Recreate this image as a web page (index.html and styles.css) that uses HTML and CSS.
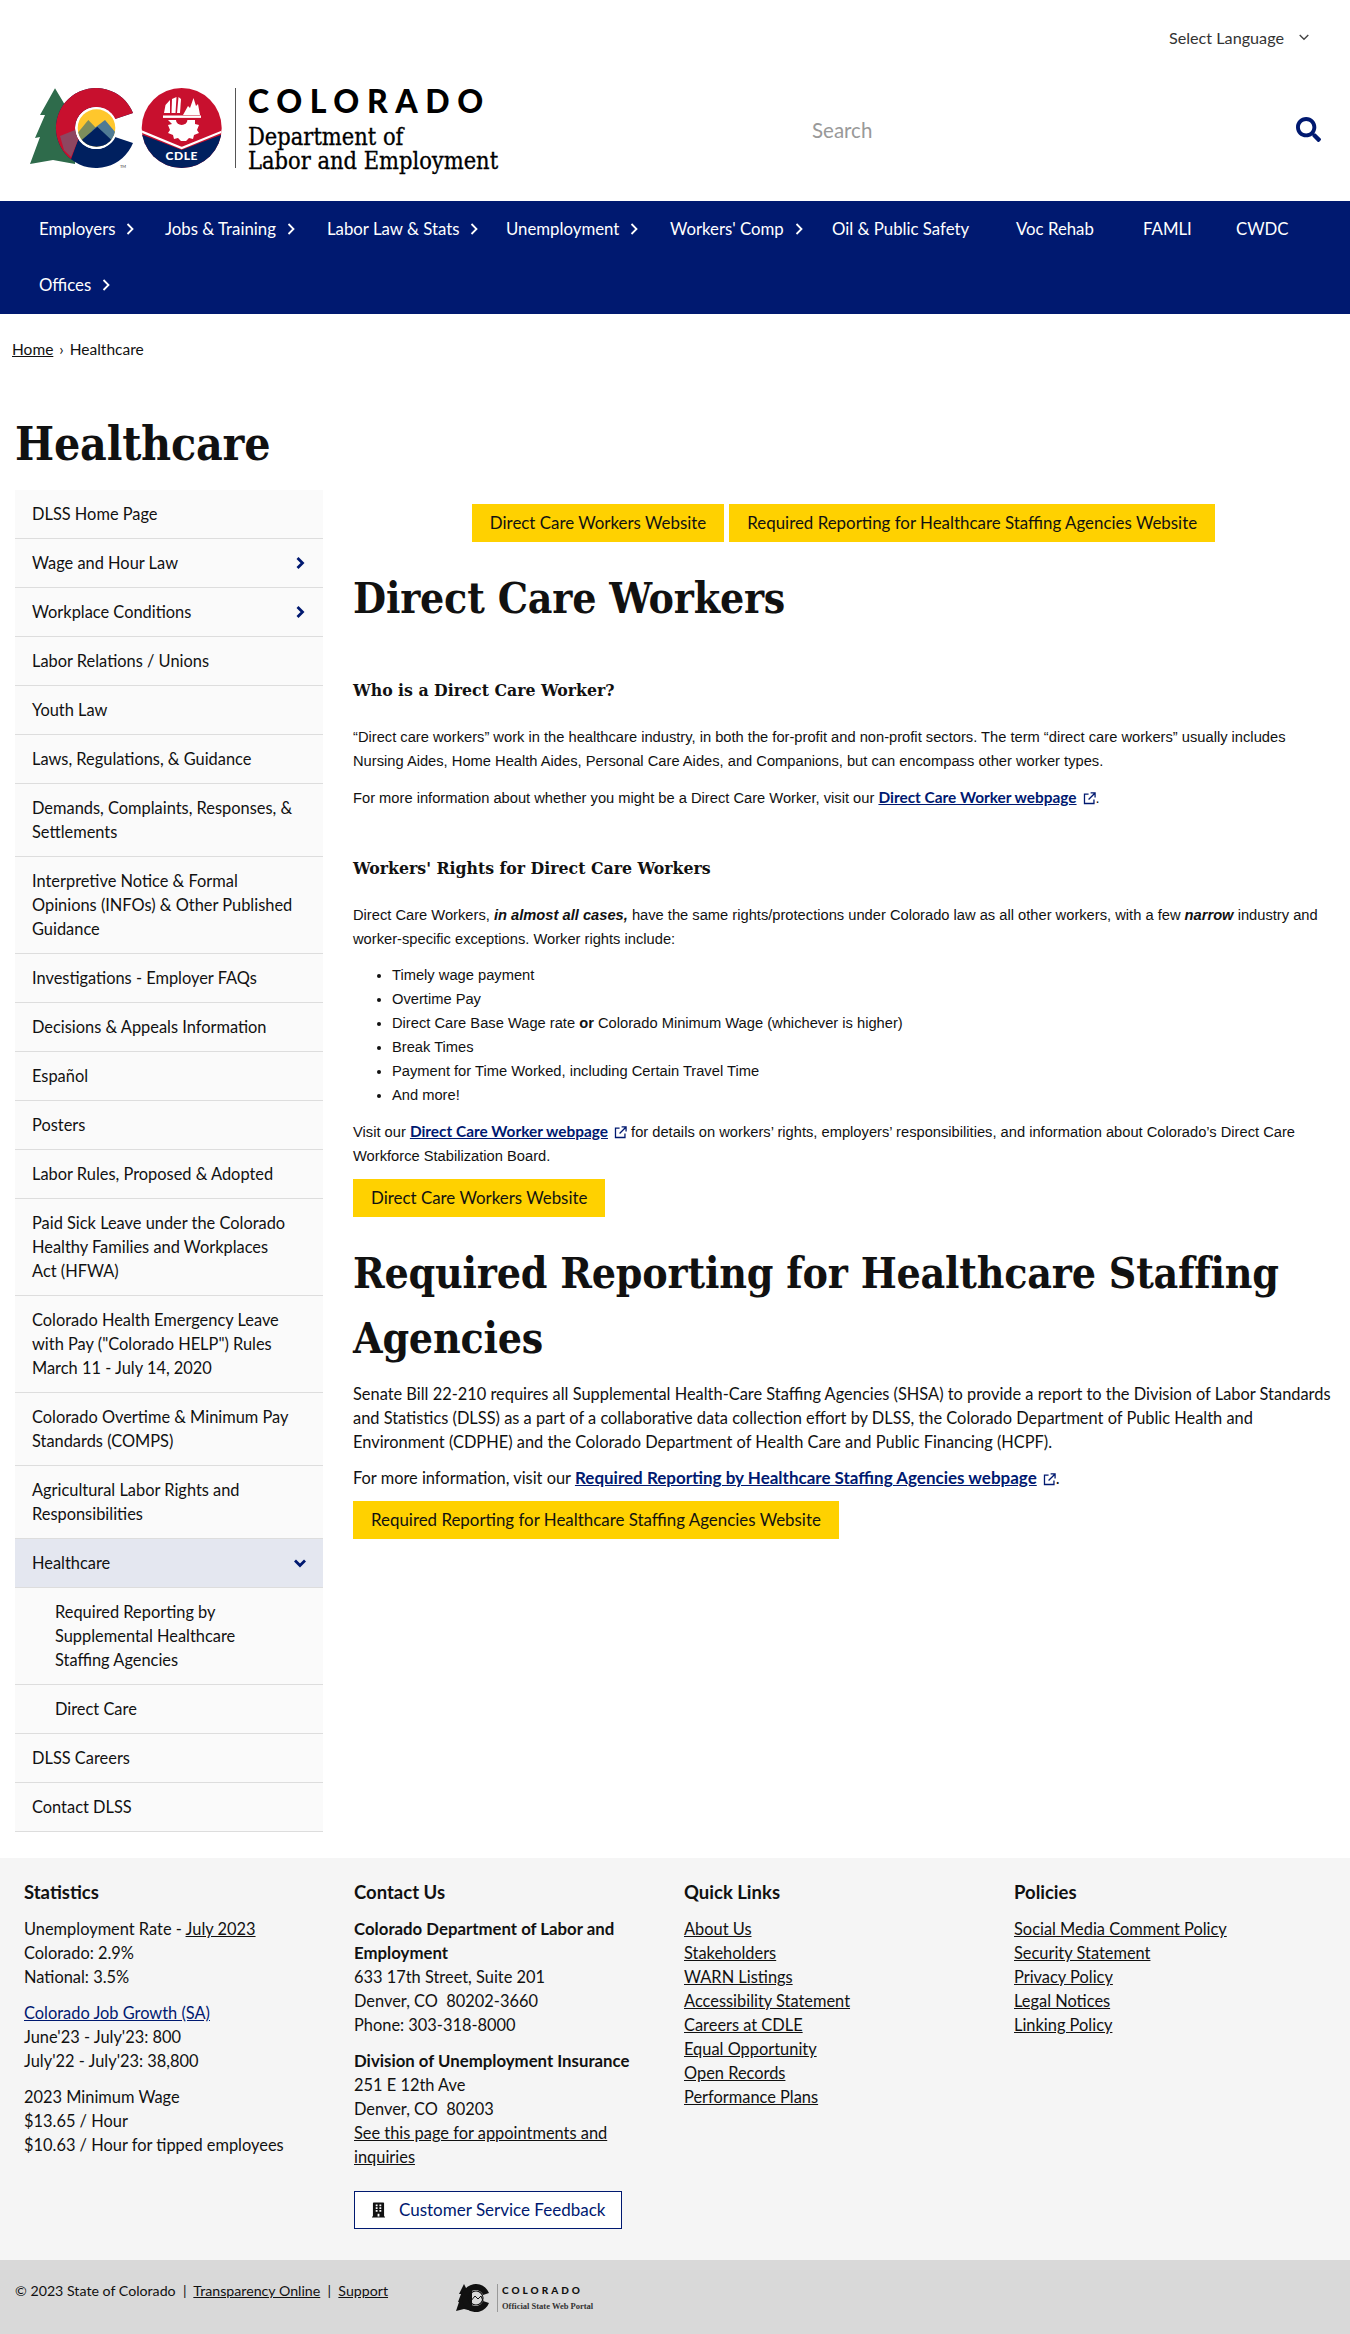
FILE: index.html
```html
<!DOCTYPE html>
<html lang="en">
<head>
<meta charset="utf-8">
<title>Healthcare | Colorado Department of Labor and Employment</title>
<link rel="stylesheet" href="styles.css">
</head>
<body>
<svg class="defs" width="0" height="0" aria-hidden="true">
  <symbol id="ext" viewBox="0 0 14 14"><path d="M6 2.2H1.6v10.2h10.2V8M8.2 1h4.8v4.8M13 1L6 8" fill="none" stroke="currentColor" stroke-width="1.4"/></symbol>
  <symbol id="chev" viewBox="0 0 10 14"><path d="M2.5 2l5 5-5 5" fill="none" stroke="currentColor" stroke-width="1.8"/></symbol>
  <symbol id="chevb" viewBox="0 0 10 14"><path d="M2.5 2l5 5-5 5" fill="none" stroke="currentColor" stroke-width="2.8"/></symbol>
</svg>

<header class="site-header">
  <div class="lang-row">
    <span class="lang">Select Language</span>
    <svg class="lang-chev" viewBox="0 0 14 10"><path d="M2 2l5 5 5-5" fill="none" stroke="#444" stroke-width="1.6"/></svg>
  </div>
  <div class="brand-row">
    <a class="brand" href="#">
      <svg class="brand-mark" viewBox="28 86 197 84" role="img" aria-label="Colorado and CDLE logos">
        <defs>
          <clipPath id="redclip"><polygon points="50,80 140,80 140,128 78,140 70,162 50,162"/></clipPath>
          <clipPath id="sunclip"><circle cx="96.5" cy="128" r="18.8"/></clipPath>
          <clipPath id="cdleclip"><circle cx="181.7" cy="128" r="40"/></clipPath>
        </defs>
        <polygon fill="#2e6b4b" points="55,88.3 40,115 45,115 35,138 40,137 30,164 53,160 75,164 75,105 65,105"/>
        <path fill="#00205f" d="M133 113A40 40 0 1 0 133 143L115 137A21 21 0 1 1 115 119Z"/>
        <path fill="#c8102e" clip-path="url(#redclip)" d="M133 113A40 40 0 1 0 133 143L115 137A21 21 0 1 1 115 119Z"/>
        <polygon fill="#8e4660" points="60,136 75,130 78,140 71,157 64,150"/>
        <circle cx="96.5" cy="128" r="21" fill="#fff"/>
        <g clip-path="url(#sunclip)">
          <rect x="76" y="108" width="42" height="40" fill="#ffc72c"/>
          <polygon fill="#7d8d5c" points="72,140 88.3,120 100,132 90,150"/>
          <polygon fill="#4f7a94" points="92,130 105,120 122,140 104,150"/>
          <polygon fill="#00205f" points="70,150 97.3,126.7 122,150"/>
        </g>
        <text class="tm" x="120" y="168">TM</text>
        <circle cx="181.7" cy="128" r="40" fill="#c8102e"/>
        <g clip-path="url(#cdleclip)">
          <polygon fill="#00205f" points="138,133 181.7,150 226,133 226,172 138,172"/>
          <polyline fill="none" stroke="#fff" stroke-width="2.2" points="138,130 181.7,148 226,130"/>
        </g>
        <text class="cdle" x="181.7" y="160" text-anchor="middle">CDLE</text>
        <g fill="#fff">
          <polygon points="164,113 165.5,105 170,100 170,113"/>
          <polygon points="171.5,113 172,99 176.5,97 175.5,113"/>
          <polygon points="177,113 178.5,97 181,99 180,113"/>
          <polygon points="183,115 188,106 190,108 193.5,98 196,106 198,104 200,115"/>
          <rect x="163" y="115.5" width="38" height="2.4"/>
          <path d="M168 120h27v4l4 1-2 5 2 3-5 2-1 4-4-1-3 3h-5l-3-3-4 1-1-4-5-2 2-3-2-5 4-1z"/>
        </g>
        <path d="M176 120a5.7 5 0 0 0 11.4 0z" fill="#c8102e"/>
      </svg>
      <span class="brand-rule"></span>
      <span class="brand-text">
        <span class="brand-state">COLORADO</span>
        <span class="brand-dept">Department of<br>Labor and Employment</span>
      </span>
    </a>
    <div class="search">
      <span class="search-input">Search</span>
      <svg class="search-icon" viewBox="0 0 512 512"><path fill="#001970" d="M505 442.7L405.3 343c-4.5-4.5-10.6-7-17-7H372c27.6-35.3 44-79.7 44-128C416 93.1 322.9 0 208 0S0 93.1 0 208s93.1 208 208 208c48.3 0 92.7-16.4 128-44v16.3c0 6.4 2.5 12.5 7 17l99.7 99.7c9.4 9.4 24.6 9.4 33.9 0l28.3-28.3c9.4-9.4 9.4-24.6.1-34zM208 336c-70.7 0-128-57.2-128-128 0-70.7 57.2-128 128-128 70.7 0 128 57.2 128 128 0 70.7-57.2 128-128 128z"/></svg>
    </div>
  </div>
  <nav class="main-nav">
    <a class="nav-item w1" href="#">Employers<svg class="nav-chev"><use href="#chev"/></svg></a>
    <a class="nav-item w2" href="#">Jobs &amp; Training<svg class="nav-chev"><use href="#chev"/></svg></a>
    <a class="nav-item w3" href="#">Labor Law &amp; Stats<svg class="nav-chev"><use href="#chev"/></svg></a>
    <a class="nav-item w4" href="#">Unemployment<svg class="nav-chev"><use href="#chev"/></svg></a>
    <a class="nav-item w5" href="#">Workers' Comp<svg class="nav-chev"><use href="#chev"/></svg></a>
    <a class="nav-item w6" href="#">Oil &amp; Public Safety</a>
    <a class="nav-item w7" href="#">Voc Rehab</a>
    <a class="nav-item w8" href="#">FAMLI</a>
    <a class="nav-item w9" href="#">CWDC</a>
    <span class="nav-break"></span>
    <a class="nav-item" href="#">Offices<svg class="nav-chev"><use href="#chev"/></svg></a>
  </nav>
</header>

<div class="breadcrumb"><a href="#">Home</a><span class="crumb-sep">›</span><span>Healthcare</span></div>
<h1 class="page-title">Healthcare</h1>

<div class="layout">
  <aside class="side-nav">
    <a class="side-item" href="#">DLSS Home Page</a>
    <a class="side-item" href="#">Wage and Hour Law<svg class="side-chev"><use href="#chevb"/></svg></a>
    <a class="side-item" href="#">Workplace Conditions<svg class="side-chev"><use href="#chevb"/></svg></a>
    <a class="side-item" href="#">Labor Relations / Unions</a>
    <a class="side-item" href="#">Youth Law</a>
    <a class="side-item" href="#">Laws, Regulations, &amp; Guidance</a>
    <a class="side-item" href="#">Demands, Complaints, Responses, &amp; Settlements</a>
    <a class="side-item" href="#">Interpretive Notice &amp; Formal Opinions (INFOs) &amp; Other Published Guidance</a>
    <a class="side-item" href="#">Investigations - Employer FAQs</a>
    <a class="side-item" href="#">Decisions &amp; Appeals Information</a>
    <a class="side-item" href="#">Español</a>
    <a class="side-item" href="#">Posters</a>
    <a class="side-item" href="#">Labor Rules, Proposed &amp; Adopted</a>
    <a class="side-item" href="#">Paid Sick Leave under the Colorado Healthy Families and Workplaces Act (HFWA)</a>
    <a class="side-item" href="#">Colorado Health Emergency Leave with Pay ("Colorado HELP") Rules March 11 - July 14, 2020</a>
    <a class="side-item" href="#">Colorado Overtime &amp; Minimum Pay Standards (COMPS)</a>
    <a class="side-item" href="#">Agricultural Labor Rights and Responsibilities</a>
    <a class="side-item active" href="#">Healthcare<svg class="side-chev down"><use href="#chevb"/></svg></a>
    <a class="side-item sub" href="#">Required Reporting by Supplemental Healthcare Staffing Agencies</a>
    <a class="side-item sub" href="#">Direct Care</a>
    <a class="side-item" href="#">DLSS Careers</a>
    <a class="side-item" href="#">Contact DLSS</a>
  </aside>

  <main class="content">
    <div class="btn-row">
      <a class="btn" href="#">Direct Care Workers Website</a>
      <a class="btn" href="#">Required Reporting for Healthcare Staffing Agencies Website</a>
    </div>
    <h2 class="sec-title first">Direct Care Workers</h2>
    <h3 class="sub-title first">Who is a Direct Care Worker?</h3>
    <p class="arial lead">“Direct care workers” work in the healthcare industry, in both the for-profit and non-profit sectors. The term “direct care workers” usually includes Nursing Aides, Home Health Aides, Personal Care Aides, and Companions, but can encompass other worker types.</p>
    <p class="arial">For more information about whether you might be a Direct Care Worker, visit our <a class="link" href="#">Direct Care Worker webpage<svg class="ext"><use href="#ext"/></svg></a>.</p>
    <h3 class="sub-title">Workers' Rights for Direct Care Workers</h3>
    <p class="arial lead">Direct Care Workers, <b><i>in almost all cases,</i></b> have the same rights/protections under Colorado law as all other workers, with a few <b><i>narrow</i></b> industry and worker-specific exceptions. Worker rights include:</p>
    <ul class="arial rights">
      <li>Timely wage payment</li>
      <li>Overtime Pay</li>
      <li>Direct Care Base Wage rate <b>or</b> Colorado Minimum Wage (whichever is higher)</li>
      <li>Break Times</li>
      <li>Payment for Time Worked, including Certain Travel Time</li>
      <li>And more!</li>
    </ul>
    <p class="arial">Visit our <a class="link" href="#">Direct Care Worker webpage<svg class="ext"><use href="#ext"/></svg></a> for details on workers’ rights, employers’ responsibilities, and information about Colorado’s Direct Care Workforce Stabilization Board.</p>
    <a class="btn solo" href="#">Direct Care Workers Website</a>
    <h2 class="sec-title">Required Reporting for Healthcare Staffing Agencies</h2>
    <p class="body">Senate Bill 22-210 requires all Supplemental Health-Care Staffing Agencies (SHSA) to provide a report to the Division of Labor Standards and Statistics (DLSS) as a part of a collaborative data collection effort by DLSS, the Colorado Department of Public Health and Environment (CDPHE) and the Colorado Department of Health Care and Public Financing (HCPF).</p>
    <p class="body">For more information, visit our <a class="link big" href="#">Required Reporting by Healthcare Staffing Agencies webpage<svg class="ext"><use href="#ext"/></svg></a>.</p>
    <a class="btn solo" href="#">Required Reporting for Healthcare Staffing Agencies Website</a>
  </main>
</div>

<footer class="site-footer">
  <section class="foot-col">
    <h4>Statistics</h4>
    <p>Unemployment Rate - <a href="#">July 2023</a><br>Colorado: 2.9%<br>National: 3.5%</p>
    <p><a class="navy" href="#">Colorado Job Growth (SA)</a><br>June'23 - July'23: 800<br>July'22 - July'23: 38,800</p>
    <p>2023 Minimum Wage<br>$13.65 / Hour<br>$10.63 / Hour for tipped employees</p>
  </section>
  <section class="foot-col">
    <h4>Contact Us</h4>
    <p><b>Colorado Department of Labor and Employment</b><br>633 17th Street, Suite 201<br>Denver, CO&nbsp; 80202-3660<br>Phone: 303-318-8000</p>
    <p><b>Division of Unemployment Insurance</b><br>251 E 12th Ave<br>Denver, CO&nbsp; 80203<br><a href="#">See this page for appointments and inquiries</a></p>
    <a class="feedback" href="#">
      <svg class="building" viewBox="0 0 448 512"><path fill="#111" d="M436 480h-20V24c0-13.255-10.745-24-24-24H56C42.745 0 32 10.745 32 24v456H12c-6.627 0-12 5.373-12 12v20h448v-20c0-6.627-5.373-12-12-12zM128 76c0-6.627 5.373-12 12-12h40c6.627 0 12 5.373 12 12v40c0 6.627-5.373 12-12 12h-40c-6.627 0-12-5.373-12-12V76zm0 96c0-6.627 5.373-12 12-12h40c6.627 0 12 5.373 12 12v40c0 6.627-5.373 12-12 12h-40c-6.627 0-12-5.373-12-12v-40zm52 148h-40c-6.627 0-12-5.373-12-12v-40c0-6.627 5.373-12 12-12h40c6.627 0 12 5.373 12 12v40c0 6.627-5.373 12-12 12zm76 160h-64v-84c0-6.627 5.373-12 12-12h40c6.627 0 12 5.373 12 12v84zm64-172c0 6.627-5.373 12-12 12h-40c-6.627 0-12-5.373-12-12v-40c0-6.627 5.373-12 12-12h40c6.627 0 12 5.373 12 12v40zm0-96c0 6.627-5.373 12-12 12h-40c-6.627 0-12-5.373-12-12v-40c0-6.627 5.373-12 12-12h40c6.627 0 12 5.373 12 12v40zm0-96c0 6.627-5.373 12-12 12h-40c-6.627 0-12-5.373-12-12V76c0-6.627 5.373-12 12-12h40c6.627 0 12 5.373 12 12v40z"/></svg>
      Customer Service Feedback
    </a>
  </section>
  <section class="foot-col links">
    <h4>Quick Links</h4>
    <a href="#">About Us</a><a href="#">Stakeholders</a><a href="#">WARN Listings</a><a href="#">Accessibility Statement</a><a href="#">Careers at CDLE</a><a href="#">Equal Opportunity</a><a href="#">Open Records</a><a href="#">Performance Plans</a>
  </section>
  <section class="foot-col links">
    <h4>Policies</h4>
    <a href="#">Social Media Comment Policy</a><a href="#">Security Statement</a><a href="#">Privacy Policy</a><a href="#">Legal Notices</a><a href="#">Linking Policy</a>
  </section>
</footer>

<div class="bottom-bar">
  <div class="legal">© 2023 State of Colorado &nbsp;|&nbsp; <a href="#">Transparency Online</a> &nbsp;|&nbsp; <a href="#">Support</a></div>
  <div class="portal">
    <svg class="portal-mark" viewBox="0 0 34 28" role="img" aria-label="Colorado logo">
      <polygon fill="#111" points="8,0 3,10 5,10 2,18 3,18 0,27 8,25 16,27 16,6 11,6"/>
      <path fill="#111" d="M33 9A14 14 0 1 0 33 19L27 17A8 8 0 1 1 27 11Z"/>
      <circle cx="20" cy="14" r="7" fill="none" stroke="#111" stroke-width="1.2"/>
      <path d="M14 18l5-6 3 3 3-3 2 5" fill="none" stroke="#111" stroke-width="1"/>
    </svg>
    <span class="portal-rule"></span>
    <span class="portal-text"><span class="portal-state">COLORADO</span><span class="portal-sub">Official State Web Portal</span></span>
  </div>
</div>
</body>
</html>
```

FILE: styles.css
```css
* { box-sizing: border-box; }
html, body { margin: 0; padding: 0; }
body {
  font-family: Lato, "Noto Sans", sans-serif;
  font-size: 16.4px;
  line-height: 24px;
  color: #111;
  background: #fff;
  overflow-x: hidden;
}
a { color: inherit; }
.defs { position: absolute; }
h1, h2, h3, h4, p, ul { margin: 0; }

/* header */
.lang-row {
  height: 75px;
  display: flex;
  justify-content: flex-end;
  align-items: center;
  padding-right: 40px;
  color: #333;
  font-size: 16.2px;
}
.lang-chev { width: 12px; height: 9px; margin-left: 14px; }
.brand-row {
  height: 126px;
  display: flex;
  padding: 13px 29px 0 30px;
}
.brand { display: flex; height: 82px; text-decoration: none; color: #000; width: 782px; }
.brand-mark { width: 197px; height: 84px; margin: -2px 0 0 -2px; flex: none; }
.brand-rule { width: 1px; height: 80px; background: #555; margin-left: 10px; }
.brand-text { display: flex; flex-direction: column; margin-left: 12px; }
.brand-state {
  font-weight: 900;
  font-size: 32px;
  line-height: 26px;
  letter-spacing: 7.6px;
}
.brand-dept {
  font-family: "DejaVu Serif Condensed", "DejaVu Serif", serif;
  font-stretch: condensed;
  font-size: 23.4px;
  line-height: 24px;
  margin-top: 11px;
  white-space: nowrap;
  -webkit-text-stroke: 0.3px #000;
}
.search { flex: 1; display: flex; justify-content: space-between; height: 60px; padding-top: 28px; }
.search-input { font-size: 20.5px; line-height: 28px; color: #999; }
.search-icon { width: 25px; height: 25px; margin-top: 1px; }
.main-nav {
  height: 113px;
  background: #001970;
  display: flex;
  flex-wrap: wrap;
  align-content: flex-start;
  padding-left: 39px;
  font-size: 16.8px;
}
.nav-item {
  height: 56px;
  display: flex;
  align-items: center;
  color: #fff;
  text-decoration: none;
  flex: none;
}
.nav-chev { width: 10px; height: 14px; margin-left: 10px; color: #fff; flex: none; }
.w1 { width: 126px; }
.w2 { width: 162px; }
.w3 { width: 179px; }
.w4 { width: 164px; }
.w5 { width: 162px; }
.w6 { width: 184px; }
.w7 { width: 127px; }
.w8 { width: 93px; }
.w9 { width: 60px; }
.nav-break { flex-basis: 100%; height: 0; }

/* title row */
.breadcrumb { font-size: 15.5px; line-height: 20px; margin-top: 25px; padding-left: 12px; }
.crumb-sep { margin: 0 6px; }
.page-title {
  font-family: "DejaVu Serif Condensed", "DejaVu Serif", serif;
  font-stretch: condensed;
  font-weight: 700;
  font-size: 46px;
  line-height: 60px;
  margin: 55px 0 0 15px;
  letter-spacing: -0.2px;
}

/* layout */
.layout {
  display: grid;
  grid-template-columns: 308px 981px;
  column-gap: 30px;
  padding-left: 15px;
  margin-top: 16px;
}
.side-nav { display: flex; flex-direction: column; }
.side-item {
  display: flex;
  justify-content: space-between;
  align-items: center;
  padding: 12px 28px 12px 17px;
  background: #fafafa;
  border-bottom: 1px solid #ddd;
  text-decoration: none;
  color: #111;
}
.side-item.sub { padding-left: 40px; padding-right: 60px; }
.side-item.active { background: #e4e7f0; }
.side-chev { width: 10px; height: 14px; color: #001970; flex: none; margin-right: 1px; }
.side-chev.down { transform: rotate(90deg); }
.side-item:has(.side-chev) { padding-right: 17px; }

.content { padding-top: 14px; }
.btn-row { display: flex; justify-content: center; gap: 5px; }
.btn {
  display: inline-block;
  background: #ffd100;
  padding: 7px 18px;
  height: 38px;
  text-decoration: none;
  color: #111;
  font-size: 16.9px;
}
.btn.solo { margin-top: 11px; }
.sec-title {
  font-family: "DejaVu Serif Condensed", "DejaVu Serif", serif;
  font-stretch: condensed;
  font-weight: 700;
  font-size: 42.4px;
  line-height: 65px;
  margin-top: 24px;
  letter-spacing: -0.2px;
}
.sub-title {
  font-family: "DejaVu Serif Condensed", "DejaVu Serif", serif;
  font-stretch: condensed;
  font-weight: 700;
  font-size: 17.5px;
  line-height: 24px;
  margin-top: 46.5px;
}
.arial { font-family: "Liberation Sans", Arial, sans-serif; font-size: 14.7px; line-height: 24px; margin-top: 12px; }
.arial.lead { margin-top: 23px; }
.body { margin-top: 12px; }
.sec-title + .body { margin-top: 11px; }
.rights { padding-left: 39px; margin-top: 12px; }
.rights + .arial { margin-top: 12px; }
.link { color: #001970; font-weight: 700; font-family: Lato, sans-serif; font-size: 15.4px; }
.link.big { font-size: 17px; }
.ext { width: 13px; height: 13px; margin-left: 6px; vertical-align: -2px; }

/* footer */
.site-footer {
  margin-top: 26px;
  height: 402px;
  background: #f5f5f5;
  display: grid;
  grid-template-columns: repeat(4, 330px);
  padding: 22px 0 0 24px;
}
.foot-col h4 { font-size: 18.5px; font-weight: 700; line-height: 24px; margin-bottom: 13px; }
.foot-col p { margin-bottom: 12px; }
.foot-col a.navy { color: #001970; }
.foot-col b { font-weight: 700; font-size: 16.8px; }
.foot-col { padding-right: 30px; }
.links { display: flex; flex-direction: column; align-items: flex-start; }
.feedback {
  display: flex;
  align-items: center;
  width: 268px;
  height: 38px;
  margin-top: 22px;
  padding-left: 17px;
  background: #fff;
  border: 1px solid #001970;
  color: #001970;
  text-decoration: none;
  font-size: 17px;
}
.building { width: 13px; height: 16px; margin-right: 14px; }
.bottom-bar {
  height: 74px;
  background: #d9d9d9;
  display: flex;
  padding: 19px 0 0 15px;
  font-size: 14.2px;
  line-height: 24px;
}
.legal { width: 440px; }
.portal { display: flex; align-items: flex-start; height: 30px; margin-top: 5px; }
.portal-mark { width: 34px; height: 28px; margin-left: 1px; }
.portal-rule { width: 1px; height: 28px; background: #999; margin: 0 4px 0 7px; }
.portal-text { display: flex; flex-direction: column; }
.portal-state { font-weight: 900; font-size: 10px; line-height: 13px; letter-spacing: 3px; }
.portal-sub { font-family: "Liberation Serif", serif; font-weight: 700; font-size: 8.5px; line-height: 12px; margin-top: 3px; color: #333; }
.tm { font-family: Lato, sans-serif; font-size: 4px; fill: #333; }
.cdle { font-family: Lato, sans-serif; font-weight: 900; font-size: 12px; letter-spacing: 0.6px; fill: #fff; }
```
